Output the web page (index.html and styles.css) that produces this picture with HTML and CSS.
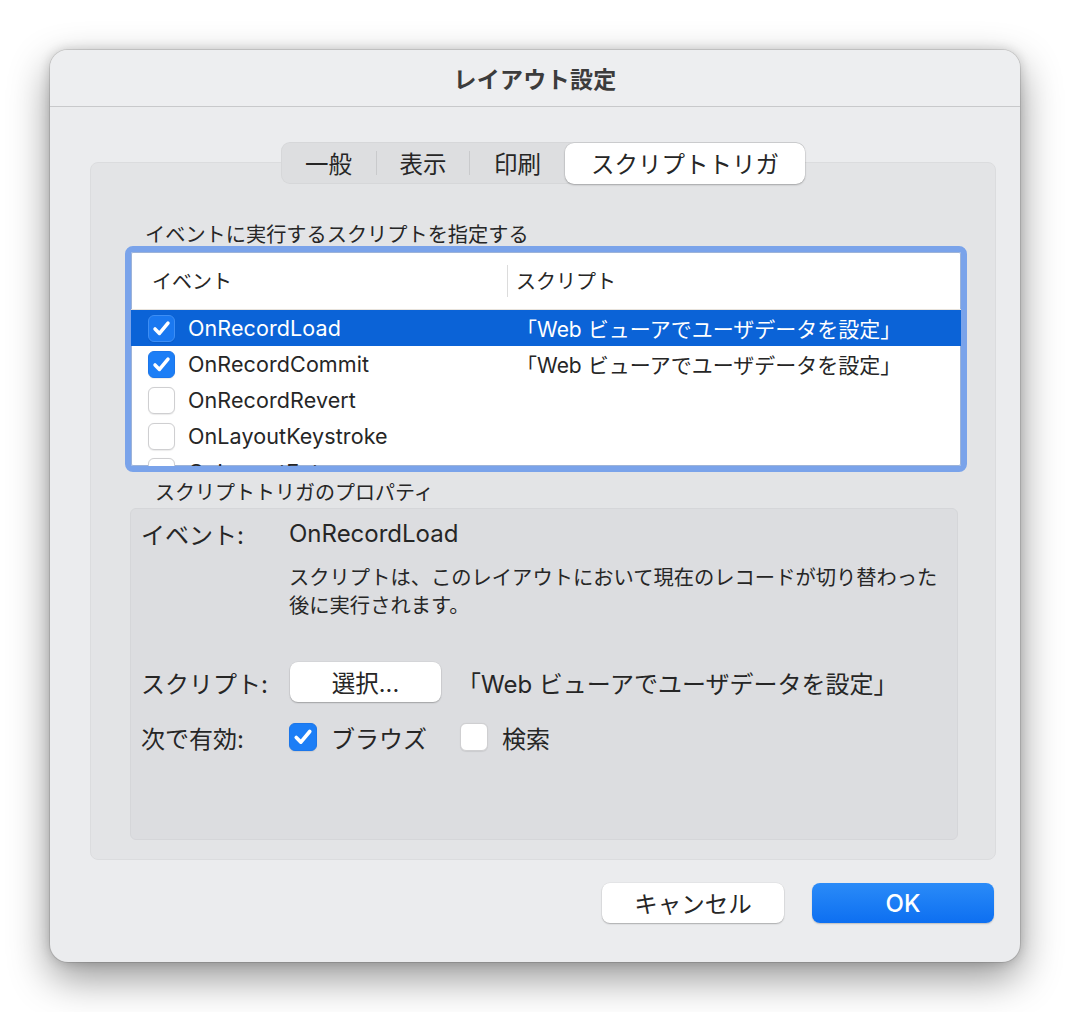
FILE: index.html
```html
<!DOCTYPE html>
<html lang="ja">
<head>
<meta charset="utf-8">
<title>レイアウト設定</title>
<link rel="stylesheet" href="styles.css">
</head>
<body>
<div class="page">
  <div class="dialog">
    <div class="titlebar">レイアウト設定</div>
    <div class="content">
      <div class="segmented">
        <div class="seg seg-1">一般</div>
        <span class="sep"></span>
        <div class="seg seg-2">表示</div>
        <span class="sep"></span>
        <div class="seg seg-3">印刷</div>
        <div class="seg seg-active">スクリプトトリガ</div>
      </div>
      <div class="tabbox">
        <div class="list-label">イベントに実行するスクリプトを指定する</div>
        <div class="list">
          <div class="list-head">
            <div class="col-event">イベント</div>
            <div class="col-script">スクリプト</div>
          </div>
          <div class="row selected">
            <div class="col-event"><span class="cb checked"><svg viewBox="0 0 27 27"><path d="M6.5 14 L11.3 18.8 L20.5 7.8"/></svg></span><span class="ev">OnRecordLoad</span></div>
            <div class="col-script">「Web ビューアでユーザデータを設定」</div>
          </div>
          <div class="row">
            <div class="col-event"><span class="cb checked"><svg viewBox="0 0 27 27"><path d="M6.5 14 L11.3 18.8 L20.5 7.8"/></svg></span><span class="ev">OnRecordCommit</span></div>
            <div class="col-script">「Web ビューアでユーザデータを設定」</div>
          </div>
          <div class="row">
            <div class="col-event"><span class="cb"></span><span class="ev">OnRecordRevert</span></div>
            <div class="col-script"></div>
          </div>
          <div class="row">
            <div class="col-event"><span class="cb"></span><span class="ev">OnLayoutKeystroke</span></div>
            <div class="col-script"></div>
          </div>
          <div class="row row-partial">
            <div class="col-event"><span class="cb"></span><span class="ev">OnLayoutEnter</span></div>
            <div class="col-script"></div>
          </div>
        </div>
        <div class="props-label">スクリプトトリガのプロパティ</div>
        <div class="props">
          <div class="prow prow-event">
            <div class="plabel">イベント:</div>
            <div class="pvalue">OnRecordLoad</div>
          </div>
          <div class="desc">スクリプトは、このレイアウトにおいて現在のレコードが切り替わった<br>後に実行されます。</div>
          <div class="prow prow-script">
            <div class="plabel">スクリプト:</div>
            <div class="pvalue pvalue-flex">
              <button class="btn btn-select">選択...</button>
              <span class="script-name">「Web ビューアでユーザデータを設定」</span>
            </div>
          </div>
          <div class="prow prow-enable">
            <div class="plabel">次で有効:</div>
            <div class="pvalue pvalue-flex">
              <span class="cb cb-lg checked"><svg viewBox="0 0 27 27"><path d="M6.5 14 L11.3 18.8 L20.5 7.8"/></svg></span>
              <span class="opt">ブラウズ</span>
              <span class="cb cb-lg cb-gap"></span>
              <span class="opt">検索</span>
            </div>
          </div>
        </div>
      </div>
      <div class="buttons">
        <button class="btn btn-cancel">キャンセル</button>
        <button class="btn btn-ok">OK</button>
      </div>
    </div>
  </div>
</div>
</body>
</html>
```
FILE: styles.css
```css
* { box-sizing: border-box; }
html, body { margin: 0; padding: 0; background: #ffffff; }
body {
  font-family: Inter, "Noto Sans CJK JP", sans-serif;
  color: #262626;
  min-height: 1012px;
}
.page { padding: 50px 0 0 50px; }
.dialog {
  width: 970px;
  height: 912px;
  background: #ebecee;
  border-radius: 18px;
  box-shadow: 0 16px 40px rgba(0,0,0,0.42), 0 0 12px rgba(0,0,0,0.18), 0 0 0 1px rgba(0,0,0,0.10);
  display: flex;
  flex-direction: column;
  overflow: hidden;
}
.titlebar {
  height: 57px;
  border-bottom: 1px solid #c8c9cb;
  background: #edeef0;
  display: flex;
  align-items: center;
  justify-content: center;
  font-weight: 700;
  font-size: 23px;
  color: #3c3c3c;
  letter-spacing: 0.3px;
}
.content {
  padding: 35px 24px 0 40px;
  display: flex;
  flex-direction: column;
}
.segmented {
  align-self: center;
  display: flex;
  align-items: center;
  height: 42px;
  background: #dddee0;
  border-radius: 9px;
  margin-bottom: -22px;
  position: relative;
  z-index: 1;
  box-shadow: inset 0 0 0 1px rgba(0,0,0,0.03);
}
.seg {
  height: 42px;
  display: flex;
  align-items: center;
  justify-content: center;
  font-size: 23.5px;
  color: #262626;
}
.seg-1 { width: 95px; }
.seg-2 { width: 92px; }
.seg-3 { width: 95px; }
.seg-active {
  width: 240px;
  height: 41px;
  background: #ffffff;
  border-radius: 9px;
  box-shadow: 0 1px 2px rgba(0,0,0,0.25), 0 0 0 0.5px rgba(0,0,0,0.08);
}
.sep {
  width: 1px;
  height: 24px;
  background: #c9cacc;
}
.tabbox {
  height: 698px;
  background: #e3e4e6;
  border: 1px solid #dbdcde;
  border-radius: 8px;
  padding: 60px 28px 0 34px;
}
.list-label {
  font-size: 20.2px;
  line-height: 23px;
  padding-left: 20px;
  color: #262626;
}
.list {
  width: 842px;
  height: 226px;
  border: 6px solid #7aa3ea;
  border-radius: 8px;
  background: #ffffff;
  overflow: hidden;
  box-shadow: inset 0 0 0 1px #9db3d8;
}
.list-head {
  display: grid;
  grid-template-columns: 376px 1fr;
  height: 58px;
  align-items: center;
  border-bottom: 1px solid #e8e3dc;
  font-size: 20px;
}
.list-head .col-event { padding-left: 21px; }
.list-head .col-script {
  border-left: 1px solid #dcdcdc;
  padding-left: 8px;
  height: 32px;
  display: flex;
  align-items: center;
}
.row {
  display: grid;
  grid-template-columns: 376px 1fr;
  height: 36px;
  align-items: center;
  font-size: 21px;
}
.row-partial { height: 13px; align-items: start; overflow: hidden; }
.row-partial .col-event { padding-top: 4px; }
.row .col-event {
  display: flex;
  align-items: center;
  padding-left: 17px;
}
.row .col-script { padding-left: 9px; font-size: 21px; }
.row .ev { margin-left: 13px; font-size: 21.5px; letter-spacing: 0.1px; }
.row.selected { background: #0b63d7; color: #ffffff; }
.cb {
  width: 27px;
  height: 27px;
  border-radius: 6px;
  background: #ffffff;
  border: 1px solid #cfcfd1;
  box-shadow: 0 0.5px 1px rgba(0,0,0,0.08);
  display: inline-flex;
  align-items: center;
  justify-content: center;
  flex: none;
}
.cb.checked {
  background: #1c7ef6;
  border-color: #1b76ea;
}
.row.selected .cb.checked { border-color: #3d8ef5; background: #1a78f0; }
.cb svg { width: 27px; height: 27px; }
.cb svg path {
  fill: none;
  stroke: #ffffff;
  stroke-width: 3.8;
  stroke-linecap: round;
  stroke-linejoin: round;
}
.props-label {
  font-size: 20px;
  line-height: 22px;
  margin-top: 10px;
  padding-left: 30px;
}
.props {
  margin-top: 4px;
  margin-left: 5px;
  width: 828px;
  height: 332px;
  background: #dcdde0;
  border: 1px solid #d5d6d9;
  border-radius: 6px;
  padding: 9px 10px 0 10px;
}
.prow {
  display: flex;
  align-items: center;
  font-size: 24px;
}
.plabel { width: 148px; flex: none; }
.prow-event { height: 30px; }
.pvalue { font-size: 24px; }
.pvalue-flex { display: flex; align-items: center; }
.desc {
  margin-top: 16px;
  margin-left: 148px;
  font-size: 20.3px;
  line-height: 28px;
}
.prow-script { margin-top: 42px; height: 40px; }
.prow-enable { margin-top: 21px; height: 28px; }
.btn {
  font-family: Inter, "Noto Sans CJK JP", sans-serif;
  border: none;
  border-radius: 8px;
  height: 40px;
  font-size: 23.5px;
  color: #262626;
  background: #ffffff;
  box-shadow: 0 1px 1.5px rgba(0,0,0,0.25), 0 0 0 0.5px rgba(0,0,0,0.06);
  padding: 0;
}
.btn-select { width: 151px; margin-left: 1px; }
.script-name { margin-left: 16px; }
.cb-lg { width: 28px; height: 28px; }
.cb-lg svg { width: 28px; height: 28px; }
.opt { margin-left: 14px; font-size: 24px; }
.cb-gap { margin-left: 33px; }
.buttons {
  display: flex;
  justify-content: flex-end;
  gap: 28px;
  margin-top: 23px;
  padding-right: 2px;
}
.btn-cancel { width: 182px; }
.btn-ok {
  width: 182px;
  color: #ffffff;
  font-weight: 500;
  font-size: 24px;
  background: linear-gradient(#2a8bf8, #0d6ff1);
  box-shadow: 0 1px 1.5px rgba(0,0,0,0.2);
}
```
